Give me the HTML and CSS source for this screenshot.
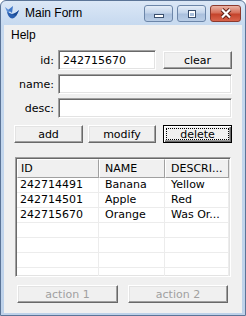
FILE: index.html
```html
<!DOCTYPE html>
<html lang="en">
<head>
    <meta charset="UTF-8">
    <title>Main Form</title>
    <link rel="stylesheet" href="styles.css">
</head>
<body>
    <div class="window">
        <!-- Title bar -->
        <div class="titlebar">
            <svg class="app-icon" width="16" height="16" viewBox="0 0 16 16">
                <path d="M1 2 L4 9 L6 6 Z" fill="#5d8fd6"/>
                <path d="M3 7 Q5 15 10 13 Q13 11 15 5 Q11 9 8 9 Z" fill="#2a5fb0"/>
                <path d="M4 5 L9 1 L8 8 Z" fill="#3f77c8"/>
                <path d="M8 9 Q11 9 15 5 L12 11 Z" fill="#1b4a94"/>
            </svg>
            <span class="title">Main Form</span>
            <div class="caption-buttons">
                <span class="cap-btn">
                    <svg width="12" height="10" viewBox="0 0 12 10">
                        <rect x="1.5" y="5.5" width="9" height="3" fill="#fff" stroke="#3a4f6e"/>
                    </svg>
                </span>
                <span class="cap-btn">
                    <svg width="12" height="10" viewBox="0 0 12 10">
                        <rect x="2.5" y="1.5" width="7" height="7" fill="#fff" stroke="#3a4f6e"/>
                        <rect x="4" y="4" width="4" height="3" fill="#a9bfdc"/>
                    </svg>
                </span>
                <span class="cap-btn close">
                    <svg width="14" height="11" viewBox="0 0 14 11">
                        <path d="M3 1.5 L11 9.5 M11 1.5 L3 9.5" stroke="#5a1c14" stroke-width="4"/>
                        <path d="M3 1.5 L11 9.5 M11 1.5 L3 9.5" stroke="#fff" stroke-width="2.2"/>
                    </svg>
                </span>
            </div>
        </div>

        <div class="client">
            <div class="menubar">
                <span class="menu-item">Help</span>
            </div>

            <div class="form">
                <div class="field-row">
                    <label class="field-label" for="idBox">id:</label>
                    <input class="textbox short" id="idBox" type="text" value="242715670">
                    <button class="btn side-btn">clear</button>
                </div>
                <div class="field-row">
                    <label class="field-label" for="nameBox">name:</label>
                    <input class="textbox" id="nameBox" type="text">
                </div>
                <div class="field-row">
                    <label class="field-label" for="descBox">desc:</label>
                    <input class="textbox" id="descBox" type="text">
                </div>

                <div class="button-row">
                    <button class="btn add-btn">add</button>
                    <button class="btn modify-btn">modify</button>
                    <button class="btn delete-btn default">delete</button>
                </div>

                <!-- List view with records -->
                <div class="listview">
                    <div class="lv-header">
                        <span class="lv-col first">ID</span>
                        <span class="lv-col">NAME</span>
                        <span class="lv-col">DESCRI...</span>
                    </div>
                    <div class="lv-row"><span class="lv-cell first">242714491</span><span class="lv-cell">Banana</span><span class="lv-cell">Yellow</span></div>
                    <div class="lv-row"><span class="lv-cell first">242714501</span><span class="lv-cell">Apple</span><span class="lv-cell">Red</span></div>
                    <div class="lv-row"><span class="lv-cell first">242715670</span><span class="lv-cell">Orange</span><span class="lv-cell">Was Or...</span></div>
                    <div class="lv-row"><span class="lv-cell first"></span><span class="lv-cell"></span><span class="lv-cell"></span></div>
                    <div class="lv-row"><span class="lv-cell first"></span><span class="lv-cell"></span><span class="lv-cell"></span></div>
                    <div class="lv-row"><span class="lv-cell first"></span><span class="lv-cell"></span><span class="lv-cell"></span></div>
                    <div class="lv-row"><span class="lv-cell first"></span><span class="lv-cell"></span><span class="lv-cell"></span></div>
                </div>

                <div class="action-row">
                    <button class="btn action-btn" disabled>action 1</button>
                    <button class="btn action-btn" disabled>action 2</button>
                </div>
            </div>
        </div>
    </div>
</body>
</html>
```

FILE: styles.css
```css
/* Vista basic style window */
body {
    margin: 0;
    background-color: #ffffff;
}

.window {
    width: 246px;
    height: 316px;
    box-sizing: border-box;
    border: 1px solid #5b7497;
    border-radius: 6px 6px 0 0;
    padding: 0 3px 2px 3px;
    background: linear-gradient(#dbe7f6 0, #c6d9ef 24px, #bed2ea 100%);
    display: flex;
    flex-direction: column;
    overflow: hidden;
}

.titlebar {
    height: 24px;
    display: flex;
    align-items: center;
    flex-shrink: 0;
}
.app-icon {
    flex-shrink: 0;
}
.title {
    margin-left: 5px;
    font-family: "Liberation Sans", Arial, sans-serif;
    font-size: 12px;
    color: #000;
    flex: 1;
}
.caption-buttons {
    display: flex;
    gap: 4px;
    align-self: flex-start;
    margin-top: 4px;
    margin-right: 1px;
}
.cap-btn {
    width: 29px;
    height: 17px;
    box-sizing: border-box;
    border: 1px solid #6c86a9;
    border-radius: 3px;
    background: linear-gradient(#e4edf8 0, #c3d4ea 45%, #aac0dd 55%, #b9cde6 100%);
    display: flex;
    align-items: center;
    justify-content: center;
}
.cap-btn.close {
    width: 31px;
    border-color: #8c3a2e;
    background: linear-gradient(#eab4a6 0, #d6705b 45%, #c4432b 55%, #d9644c 100%);
}

.client {
    flex: 1;
    background-color: #f0f0f0;
    display: flex;
    flex-direction: column;
    font-family: "DejaVu Sans", Verdana, sans-serif;
    font-size: 11px;
    color: #000;
}

.menubar {
    height: 19px;
    display: flex;
    align-items: center;
    padding-left: 7px;
    font-family: "Liberation Sans", Arial, sans-serif;
    font-size: 12px;
}

.form {
    padding: 6px 10px 0 10px;
    display: flex;
    flex-direction: column;
}
.field-row {
    display: flex;
    align-items: center;
    height: 20px;
    margin-bottom: 4px;
}
.field-label {
    flex: 0 0 40px;
    margin-right: 4px;
    text-align: right;
}
.textbox {
    box-sizing: border-box;
    height: 20px;
    flex: 1;
    min-width: 0;
    width: 0;
    margin: 0;
    padding: 0 0 0 4px;
    font-family: "DejaVu Sans", Verdana, sans-serif;
    font-size: 11px;
    color: #000;
    background-color: #fff;
    border: 1px solid;
    border-color: #a0a0a0 #ffffff #ffffff #a0a0a0;
    box-shadow: inset 1px 1px 0 #696969, inset -1px -1px 0 #e3e3e3;
    outline: none;
}
.textbox.short {
    flex: 0 0 98px;
    width: 98px;
}

/* Classic raised button */
.btn {
    box-sizing: border-box;
    flex-shrink: 0;
    height: 18px;
    margin: 0;
    padding: 0;
    font-family: "DejaVu Sans", Verdana, sans-serif;
    font-size: 11px;
    color: #000;
    background-color: #f0f0f0;
    border: 1px solid;
    border-color: #ffffff #696969 #696969 #ffffff;
    box-shadow: inset -1px -1px 0 #a0a0a0, inset 1px 1px 0 #e3e3e3;
}
.btn.default {
    border-color: #000;
    box-shadow: inset 1px 1px 0 #fff, inset -1px -1px 0 #696969, inset -2px -2px 0 #a0a0a0;
    outline: 1px dotted #000;
    outline-offset: -4px;
}
.btn:disabled {
    color: #a0a0a0;
}
.side-btn {
    width: 69px;
    margin-left: 7px;
}

.button-row {
    display: flex;
    margin-top: 3px;
}
.add-btn {
    width: 69px;
}
.modify-btn {
    width: 68px;
    margin-left: 5px;
}
.delete-btn {
    width: 69px;
    margin-left: 7px;
}

/* List view */
.listview {
    margin: 14px 1px 0 1px;
    height: 120px;
    box-sizing: border-box;
    background-color: #fff;
    border: 1px solid;
    border-color: #a0a0a0 #ffffff #ffffff #a0a0a0;
    box-shadow: inset 1px 1px 0 #696969, inset -1px -1px 0 #e3e3e3;
    padding: 1px;
    overflow: hidden;
}
.lv-header {
    display: grid;
    grid-template-columns: 82px 66px 64px;
    height: 19px;
}
.lv-col {
    box-sizing: border-box;
    padding-left: 5px;
    line-height: 17px;
    background-color: #f0f0f0;
    border: 1px solid;
    border-color: #ffffff #a0a0a0 #a0a0a0 #ffffff;
}
.lv-col.first {
    padding-left: 3px;
}
.lv-row {
    display: grid;
    grid-template-columns: 82px 66px 64px;
    height: 15px;
}
.lv-cell {
    box-sizing: border-box;
    padding-left: 6px;
    line-height: 14px;
    border-right: 1px solid #ececec;
    border-bottom: 1px solid #ececec;
    white-space: nowrap;
}
.lv-cell.first {
    padding-left: 3px;
}

.action-row {
    display: flex;
    margin-top: 8px;
    padding-left: 3px;
}
.action-btn {
    width: 101px;
}
.action-btn + .action-btn {
    width: 100px;
    margin-left: 10px;
}
```
